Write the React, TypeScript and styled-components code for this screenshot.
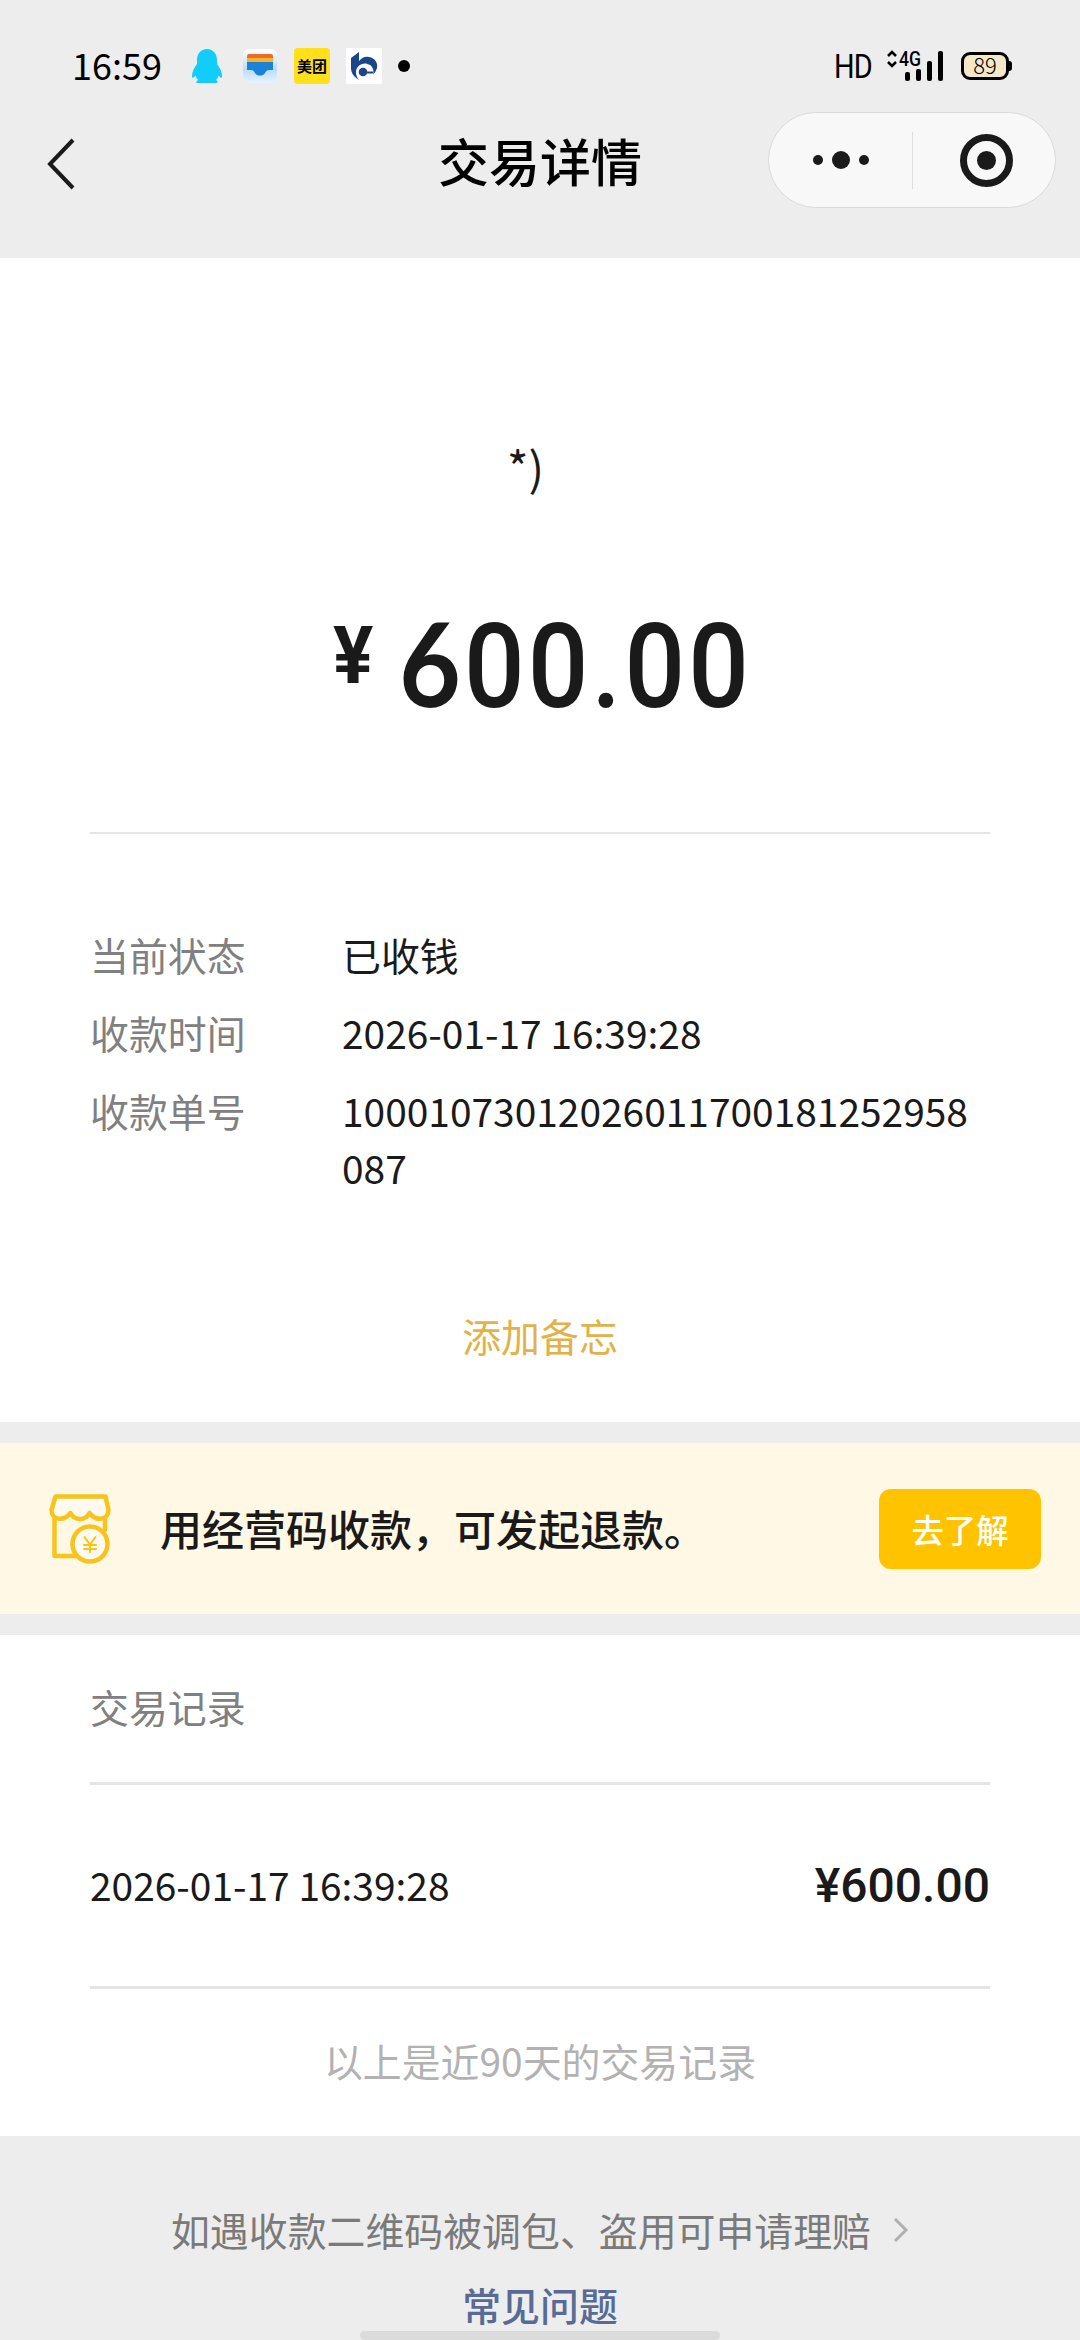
import React from "react";
import styled, { createGlobalStyle, css } from "styled-components";

const Global = createGlobalStyle`
  * { box-sizing: border-box; }
  body { margin: 0; background: #ededed; font-family: "Noto Sans CJK SC", "Noto Sans", sans-serif; color: #1a1a1a; }
`;

const Page = styled.div`
  width: 1080px;
  height: 2340px;
  display: flex;
  flex-direction: column;
  overflow: hidden;
  background: #ededed;
`;

const Header = styled.header`
  height: 258px;
  flex: none;
`;

const StatusBar = styled.div`
  height: 112px;
  padding: 20px 68px 0 72px;
  display: flex;
  justify-content: space-between;
  align-items: center;
`;

const StatusGroup = styled.div`
  display: flex;
  align-items: center;
`;

const Clock = styled.span`
  width: 119px;
  padding-bottom: 5px;
  font-size: 36px;
  line-height: 40px;
  color: #000;
`;

const AppIcons = styled.div`
  display: flex;
  align-items: center;
  gap: 16px;
  svg { display: block; }
`;

const Meituan = styled.span`
  width: 36px;
  height: 36px;
  border-radius: 4px;
  background: #ffe01b;
  color: #000;
  font-size: 15px;
  line-height: 35px;
  font-weight: 700;
  text-align: center;
`;

const HdLabel = styled.span`
  font-family: Roboto, sans-serif;
  font-size: 34px;
  line-height: 40px;
  color: #000;
  width: 51px;
  letter-spacing: -1px;
  transform: scaleX(0.85);
  transform-origin: left center;
`;

const Battery = styled.span`
  width: 48px;
  height: 28px;
  border: 3px solid #000;
  border-radius: 9px;
  background: #f5e8c8;
  font-size: 22px;
  line-height: 19px;
  font-weight: 300;
  text-align: center;
  color: #000;
`;

const BatteryTip = styled.span`
  width: 3px;
  height: 10px;
  border-radius: 0 3px 3px 0;
  background: #000;
`;

const Signal = styled.svg`
  display: block;
  margin-right: 18px;
`;

const NavBar = styled.div`
  height: 96px;
  padding: 0 24px 0 46px;
  display: grid;
  grid-template-columns: 1fr auto 1fr;
  align-items: center;
`;

const BackIcon = styled.svg`
  display: block;
  margin-top: 5px;
`;

const Title = styled.h1`
  margin: 0;
  padding-left: 22px;
  font-size: 51px;
  line-height: 96px;
  font-weight: 500;
  color: #000;
  transform: translateX(-22px);
`;

const Capsule = styled.div`
  justify-self: end;
  width: 288px;
  height: 96px;
  border: 1px solid #dadada;
  border-radius: 48px;
  background: #f8f8f8;
  display: flex;
  align-items: center;
`;

const CapsuleHalf = styled.div`
  width: 143px;
  display: flex;
  justify-content: center;
  align-items: center;
  gap: 9px;
  & + & { border-left: 1px solid #dedede; height: 57px; padding-left: 4px; }
`;

const Dot = styled.span<{ $size: number }>`
  width: ${(p) => p.$size}px;
  height: ${(p) => p.$size}px;
  border-radius: 50%;
  background: ${(p) => (p.$size === 12 ? "#000" : "#1a1a1a")};
`;

const Ring = styled.span`
  width: 53px;
  height: 53px;
  border: 7px solid #1a1a1a;
  border-radius: 50%;
  display: flex;
  align-items: center;
  justify-content: center;
`;

const Card = styled.section<{ $height: number }>`
  flex: none;
  height: ${(p) => p.$height}px;
  padding: 0 90px;
  background: #fff;
  display: flex;
  flex-direction: column;
`;

const Payer = styled.div`
  margin-top: 176px;
  padding-right: 29px;
  height: 64px;
  line-height: 64px;
  font-size: 46px;
  text-align: center;
`;

const AmountRow = styled.div`
  margin: 102px 0 96px;
  padding-left: 243px;
  height: 136px;
  display: flex;
  font-family: Roboto, sans-serif;
  font-weight: 500;
`;

const Currency = styled.span`
  flex: none;
  margin-right: 22px;
  width: 44px;
  font-size: 80px;
  line-height: 113px;
  font-weight: 700;
  transform: scaleX(0.94);
  transform-origin: left center;
`;

const Amount = styled.span`
  display: block;
  font-size: 116px;
  line-height: 126px;
  letter-spacing: 3.4px;
  transform: scaleX(0.92);
  transform-origin: left center;
  height: 126px;
  &::first-letter { font-family: Lato, sans-serif; font-weight: 700; }
`;

const Rule = styled.div<{ $thick?: boolean }>`
  flex: none;
  height: ${(p) => (p.$thick ? 3 : 2)}px;
  background: #e5e5e5;
`;

const bodyText = css`
  font-size: 38.9px;
  line-height: 57px;
`;

const Details = styled.dl`
  margin: 92px 0 0;
  display: grid;
  grid-template-columns: 252px 640px;
  row-gap: 21px;
  ${bodyText}
  dt { color: #808080; }
  dd { margin: 0; word-break: break-all; }
`;

const MemoLink = styled.a`
  margin-top: 111px;
  text-align: center;
  color: #e2b24a;
  ${bodyText}
`;

const Banner = styled.section`
  flex: none;
  height: 171px;
  margin: 21px 0;
  padding: 1px 39px 0 47px;
  display: flex;
  align-items: center;
  background: #fff8e5;
  svg { display: block; margin-right: 47px; }
`;

const BannerText = styled.span`
  flex: 1;
  padding-bottom: 3px;
  font-size: 42px;
  line-height: 60px;
  font-weight: 500;
`;

const BannerButton = styled.button`
  width: 162px;
  height: 80px;
  padding: 0;
  border: 0;
  border-radius: 12px;
  background: #ffc300;
  color: #fff;
  font: 500 32.4px/80px "Noto Sans CJK SC", sans-serif;
`;

const RecordsTitle = styled.div`
  margin-top: 43px;
  margin-bottom: 47px;
  color: #808080;
  ${bodyText}
`;

const RecordRow = styled.div`
  height: 201px;
  display: flex;
  align-items: center;
  justify-content: space-between;
  ${bodyText}
`;

const RecordTime = styled.span`
  padding-bottom: 3px;
`;

const RecordAmount = styled.span`
  font-family: Roboto, sans-serif;
  font-size: 48px;
  font-weight: 500;
`;

const RecordsNote = styled.div`
  margin-top: 43px;
  text-align: center;
  color: #b2b2b2;
  ${bodyText}
`;

const Footer = styled.footer`
  flex: 1;
  display: flex;
  flex-direction: column;
  align-items: center;
  ${bodyText}
`;

const ClaimLink = styled.a`
  margin-top: 65px;
  display: flex;
  align-items: center;
  gap: 22px;
  color: #7a7a7a;
`;

const FaqLink = styled.a`
  margin-top: 18px;
  color: #576b95;
  font-weight: 500;
`;

const HomeBar = styled.div`
  margin-top: -2px;
  width: 360px;
  height: 9px;
  border-radius: 5px;
  background: #dbdbdb;
  flex: none;
`;

const Penguin = () => (
  <svg width="35" height="36" viewBox="0 0 35 36" fill="#12cdfb">
    <path d="M16 1C9.500 1 6 6 6 12v4C3 20 1 24 1 28.500c0 2 1.500 1.500 3.500-1 .5 2 1.500 3.500 3 4.500C5 32.700 4.500 35 7 35h18c2.500 0 2-2.300-.5-3 1.500-1 2.500-2.500 3-4.500 2 2.500 3.500 3 3.500 1C31 24 29 20 26 16v-4C26 6 22.500 1 16 1z" />
  </svg>
);

const Wallet = () => (
  <svg width="36" height="36" viewBox="0 0 36 36">
    <defs>
      <linearGradient id="walletBase" x1="0" y1="0" x2="0" y2="1">
        <stop offset="0" stopColor="#fff" />
        <stop offset="0.6" stopColor="#b9dcfb" />
        <stop offset="1" stopColor="#e8f4fe" />
      </linearGradient>
    </defs>
    <rect x="1" y="1" width="34" height="34" rx="7" fill="url(#walletBase)" />
    <path d="M5 10V8a2 2 0 0 1 2-2h22a2 2 0 0 1 2 2v2z" fill="#f06a28" />
    <path d="M5 10h26v4H5z" fill="#fbb32a" />
    <path d="M5 14h26v8h-4c-2 0-3 1-4 3s-3 2.500-5 2.500-4-.5-5-2.500-2-3-4-3H5z" fill="#1a83d8" />
  </svg>
);

const BankLogo = () => (
  <svg width="36" height="36" viewBox="0 0 36 36">
    <path d="M0 0h36v36H0z" fill="#fff" />
    <path d="M5 10l8-6v9c3-4 7-5 10-4 6 1 9 6 8 11-1 3-2 5-4 6 1-3 0-7-3-9-6-4-14 0-14 7 0 3 1 6 3 8-5-3-8-7-8-12z" fill="#1a4789" />
    <circle cx="17" cy="24" r="4.300" fill="#1a4789" />
    <path d="M20 23.500h7v2h-7z" fill="#1a4789" />
  </svg>
);

const ShopIcon = () => (
  <svg width="66" height="74" viewBox="0 0 66 74" fill="none" stroke="#f8c41c" strokeWidth="4.500" strokeLinejoin="round" strokeLinecap="round">
    <path d="M7.500 22v42H30M58 24v14" />
    <path d="M8.500 4.500h50L61.500 18c0 10-12 12-19 3-4 8-15 8-19 0-7 9-19 7-19-3z" fill="#fffaf0" />
    <circle cx="43" cy="52" r="17.500" fill="#fffaf0" />
    <path d="M37.500 45l5.500 7.500 5.500-7.500M43 52.500V60M37 53h12M37 57h12" strokeWidth="2" />
  </svg>
);

export default function App() {
  return (
    <Page>
      <Global />
      <Header>
        <StatusBar>
          <StatusGroup>
            <Clock>16:59</Clock>
            <AppIcons>
              <Penguin />
              <Wallet />
              <Meituan>美团</Meituan>
              <BankLogo />
              <Dot $size={12} />
            </AppIcons>
          </StatusGroup>
          <StatusGroup>
            <HdLabel>HD</HdLabel>
            <Signal width="58" height="48" viewBox="0 -8 58 48">
              <path d="M3 6l4-4 4 4M3 12l4 4 4-4" fill="none" stroke="#000" strokeWidth="2.600" />
              <text x="14" y="16" fontSize="21" fontFamily="Roboto" fontWeight="500" textLength="22" lengthAdjust="spacingAndGlyphs">4G</text>
              <rect x="20" y="22" width="5" height="9" rx="2" />
              <rect x="31" y="19" width="5" height="12" rx="2" />
              <rect x="42" y="11" width="5" height="20" rx="2" />
              <rect x="53" y="1" width="5" height="30" rx="2" />
            </Signal>
            <Battery>89</Battery>
            <BatteryTip />
          </StatusGroup>
        </StatusBar>
        <NavBar>
          <BackIcon width="30" height="54" viewBox="0 0 30 54" fill="none" stroke="#1a1a1a" strokeWidth="4">
            <path d="M27 4L4 28l23 24" />
          </BackIcon>
          <Title>交易详情</Title>
          <Capsule>
            <CapsuleHalf>
              <Dot $size={10} />
              <Dot $size={18} />
              <Dot $size={10} />
            </CapsuleHalf>
            <CapsuleHalf>
              <Ring>
                <Dot $size={19} />
              </Ring>
            </CapsuleHalf>
          </Capsule>
        </NavBar>
      </Header>

      <Card $height={1164}>
        <Payer>*)</Payer>
        <AmountRow>
          <Currency>¥</Currency>
          <Amount>600.00</Amount>
        </AmountRow>
        <Rule />
        <Details>
          <dt>当前状态</dt>
          <dd>已收钱</dd>
          <dt>收款时间</dt>
          <dd>2026-01-17 16:39:28</dd>
          <dt>收款单号</dt>
          <dd>10001073012026011700181252958087</dd>
        </Details>
        <MemoLink>添加备忘</MemoLink>
      </Card>

      <Banner>
        <ShopIcon />
        <BannerText>用经营码收款，可发起退款。</BannerText>
        <BannerButton>去了解</BannerButton>
      </Banner>

      <Card $height={501}>
        <RecordsTitle>交易记录</RecordsTitle>
        <Rule $thick />
        <RecordRow>
          <RecordTime>2026-01-17 16:39:28</RecordTime>
          <RecordAmount>¥600.00</RecordAmount>
        </RecordRow>
        <Rule $thick />
        <RecordsNote>以上是近90天的交易记录</RecordsNote>
      </Card>

      <Footer>
        <ClaimLink>
          如遇收款二维码被调包、盗用可申请理赔
          <svg width="16" height="28" viewBox="0 0 16 28" fill="none" stroke="#b0b0b0" strokeWidth="3">
            <path d="M2 3l11 11L2 25" />
          </svg>
        </ClaimLink>
        <FaqLink>常见问题</FaqLink>
        <HomeBar />
      </Footer>
    </Page>
  );
}
